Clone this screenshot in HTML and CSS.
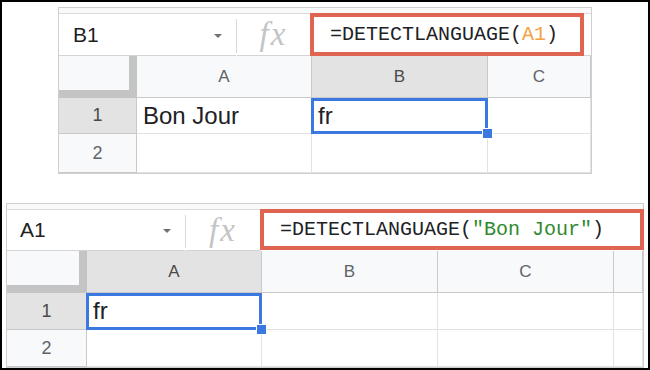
FILE: index.html
```html
<!DOCTYPE html>
<html lang="en">
<head>
  <meta charset="UTF-8" />
  <title>DETECTLANGUAGE</title>
  <link rel="stylesheet" href="styles.css">
</head>
<body>
  <div class="frame">

    <!-- cell reference -->
    <div class="sheet sheet-top">
      <div class="toolbar-edge"></div>
      <div class="formula-bar">
        <div class="name-box"><span class="cell-ref">B1</span><span class="caret"></span></div>
        <div class="divider"></div>
        <div class="fx">fx</div>
        <div class="formula">=DETECTLANGUAGE(<span class="ref">A1</span>)</div>
        <div class="bar-rest"></div>
      </div>
      <div class="grid">
        <div class="corner"></div>
        <div class="col-head">A</div>
        <div class="col-head selected">B</div>
        <div class="col-head">C</div>

        <div class="row-head selected">1</div>
        <div class="cell">Bon Jour</div>
        <div class="cell active">fr<span class="handle"></span></div>
        <div class="cell"></div>

        <div class="row-head">2</div>
        <div class="cell"></div>
        <div class="cell"></div>
        <div class="cell"></div>
      </div>
    </div>

    <!-- text string -->
    <div class="sheet sheet-bottom">
      <div class="toolbar-edge"></div>
      <div class="formula-bar">
        <div class="name-box"><span class="cell-ref">A1</span><span class="caret"></span></div>
        <div class="divider"></div>
        <div class="fx">fx</div>
        <div class="formula">=DETECTLANGUAGE(<span class="str">"Bon Jour"</span>)</div>
      </div>
      <div class="grid">
        <div class="corner"></div>
        <div class="col-head selected">A</div>
        <div class="col-head">B</div>
        <div class="col-head">C</div>
        <div class="col-head"></div>

        <div class="row-head selected">1</div>
        <div class="cell active">fr<span class="handle"></span></div>
        <div class="cell"></div>
        <div class="cell"></div>
        <div class="cell"></div>

        <div class="row-head">2</div>
        <div class="cell"></div>
        <div class="cell"></div>
        <div class="cell"></div>
        <div class="cell"></div>
      </div>
    </div>

  </div>
</body>
</html>
```

FILE: styles.css
```css
body {
  margin: 0;
  background: #fff;
  font-family: "Liberation Sans", Arial, sans-serif;
  color: #202124;
}

.frame {
  width: 650px;
  height: 370px;
  box-sizing: border-box;
  border: 2px solid #000;
  overflow: hidden;
  background: #fff;
}

.sheet {
  box-sizing: border-box;
  border: 1px solid #cfcfcf;
  background: #fff;
}

.sheet-top {
  width: 534px;
  margin: 5px 0 0 56px;
}

.sheet-bottom {
  width: 638px;
  margin: 29px 0 0 4px;
}

.toolbar-edge {
  height: 5px;
  background: #f9f9f9;
  border-bottom: 1px solid #dcdcdc;
}

/* formula bar */
.formula-bar {
  display: flex;
  align-items: center;
  height: 42px;
}

.sheet-bottom .formula-bar {
  height: 41px;
}

.name-box {
  display: flex;
  align-items: center;
  justify-content: space-between;
  width: 177px;
  box-sizing: border-box;
  padding: 0 14px 0 14px;
  align-self: stretch;
  border-bottom: 1px solid #d4d4d4;
}

.sheet-bottom .name-box {
  width: 178px;
  padding-left: 13px;
}

.cell-ref {
  font-size: 21px;
  color: #1f1f1f;
}

.caret {
  width: 0;
  height: 0;
  border-left: 4px solid transparent;
  border-right: 4px solid transparent;
  border-top: 4px solid #707070;
  margin-top: 2px;
}

.divider {
  width: 1px;
  align-self: stretch;
  margin: 5px 0 3px;
  background: #dadada;
}

.fx {
  width: 73px;
  align-self: stretch;
  display: flex;
  align-items: center;
  justify-content: center;
  font-family: "Liberation Serif", "Times New Roman", serif;
  font-style: italic;
  font-size: 33px;
  letter-spacing: 2px;
  color: #c4c4c4;
  border-bottom: 1px solid #d4d4d4;
}

.sheet-bottom .fx {
  width: 74px;
}

.formula {
  box-sizing: border-box;
  align-self: stretch;
  display: flex;
  align-items: center;
  width: 274px;
  padding-left: 16px;
  border: 4px solid #e06452;
  font-family: "Liberation Mono", "DejaVu Sans Mono", monospace;
  font-size: 20px;
  color: #202124;
  white-space: pre;
  margin-top: -1px;
}

.sheet-bottom .formula {
  flex: 1;
  width: auto;
  margin-right: -1px;
  margin-bottom: 1px;
}

.formula .ref {
  color: #f2a23e;
}

.formula .str {
  color: #2f8a2f;
}

.bar-rest {
  flex: 1;
  align-self: stretch;
  border-bottom: 1px solid #d4d4d4;
}

/* grid */
.grid {
  display: grid;
}

.sheet-top .grid {
  grid-template-columns: 78px 175px 176px 1fr;
  grid-template-rows: 42px 36px 39px;
}

.sheet-bottom .grid {
  grid-template-columns: 80px 175px 176px 176px 1fr;
  grid-template-rows: 42px 37px 37px;
}

.corner {
  background: #f8f9fa;
  border-right: 8px solid #c4c4c4;
  border-bottom: 8px solid #c4c4c4;
}

.col-head,
.row-head {
  display: flex;
  align-items: center;
  justify-content: center;
  background: #f8f9fa;
  color: #5f6368;
  font-size: 17px;
  border-right: 1px solid #c9c9c9;
  border-bottom: 1px solid #c9c9c9;
}

.row-head {
  font-size: 18px;
}

.col-head.selected,
.row-head.selected {
  background: #e3e3e3;
  color: #4a4a4a;
}

.cell {
  position: relative;
  display: flex;
  align-items: center;
  padding-left: 6px;
  font-size: 24px;
  color: #202124;
  border-right: 1px solid #e2e2e2;
  border-bottom: 1px solid #e2e2e2;
}

.cell.active::after {
  content: "";
  position: absolute;
  top: 0;
  left: -1px;
  right: -1px;
  bottom: -1px;
  border: 3px solid #3b78e0;
  pointer-events: none;
}

.handle {
  position: absolute;
  right: -6px;
  bottom: -6px;
  width: 9px;
  height: 9px;
  background: #3b78e0;
  border: 1px solid #fff;
  z-index: 1;
}
```
